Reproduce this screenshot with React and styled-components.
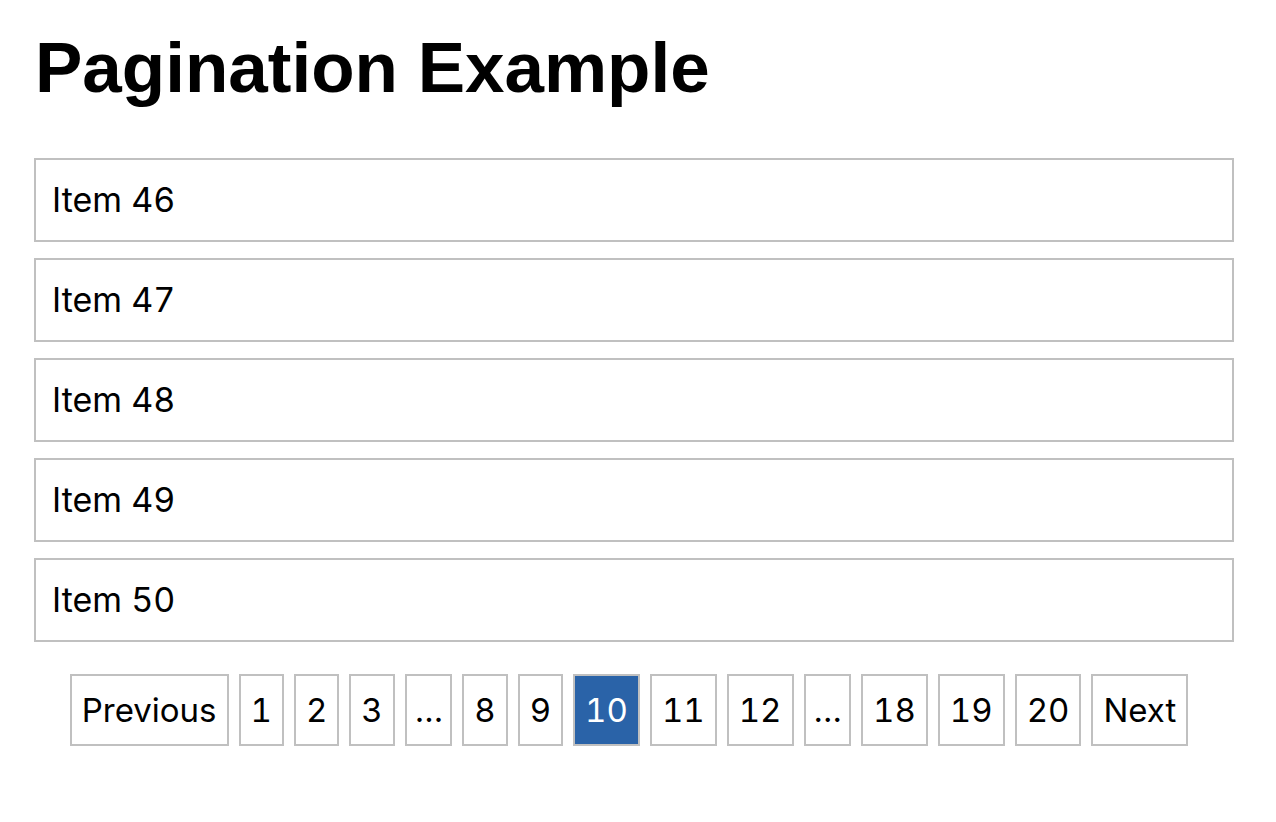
import React, { useState } from "react";
import styled, { createGlobalStyle } from "styled-components";

const GlobalStyle = createGlobalStyle`
  html, body {
    margin: 0;
    padding: 0;
    background: #ffffff;
  }
`;

const Page = styled.div`
  padding: 27px 42px 40px 34px;
  font-family: Inter, "Noto Sans CJK JP", sans-serif;
  font-variant-numeric: tabular-nums;
  color: #000;
`;

const Title = styled.h1`
  margin: 0 0 49px;
  font-family: "Liberation Sans", Arial, sans-serif;
  font-size: 71px;
  line-height: 82px;
  font-weight: 700;
  padding-left: 1px;
`;

const List = styled.div`
  display: flex;
  flex-direction: column;
  gap: 16px;
`;

const Item = styled.div`
  border: 2px solid #c0c0c0;
  padding: 16px;
  font-size: 34px;
  line-height: 48px;
`;

const Pager = styled.div`
  display: flex;
  justify-content: center;
  gap: 10px;
  margin-top: 32px;
  padding-right: 10px;
`;

const PageButton = styled.button`
  border: 2px solid #c0c0c0;
  background: ${(p) => (p.$active ? "#2a63a8" : "#ffffff")};
  color: ${(p) => (p.$active ? "#ffffff" : "#000000")};
  font-family: inherit;
  font-variant-numeric: tabular-nums;
  font-size: 33px;
  line-height: 48px;
  padding: 10px ${(p) => (p.$ellipsis ? "8px" : "10px")};
  letter-spacing: ${(p) => (p.$ellipsis ? "-1px" : "normal")};
  margin: 0;
  cursor: pointer;
`;

const TOTAL = 20;

const pageList = () => [1, 2, 3, "…", 8, 9, 10, 11, 12, "…", 18, 19, 20];

export default function App() {
  const [page, setPage] = useState(10);
  const items = Array.from({ length: 5 }, (_, i) => (page - 1) * 5 + i + 1);

  return (
    <>
      <GlobalStyle />
      <Page>
        <Title>Pagination Example</Title>
        <List>
          {items.map((n) => (
            <Item key={n}>Item {n}</Item>
          ))}
        </List>
        <Pager>
          <PageButton onClick={() => setPage(Math.max(1, page - 1))}>Previous</PageButton>
          {pageList(page).map((p, i) => (
            <PageButton
              key={i}
              $active={p === page}
              $ellipsis={p === "…"}
              onClick={() => typeof p === "number" && setPage(p)}
            >
              {p}
            </PageButton>
          ))}
          <PageButton onClick={() => setPage(Math.min(TOTAL, page + 1))}>Next</PageButton>
        </Pager>
      </Page>
    </>
  );
}
